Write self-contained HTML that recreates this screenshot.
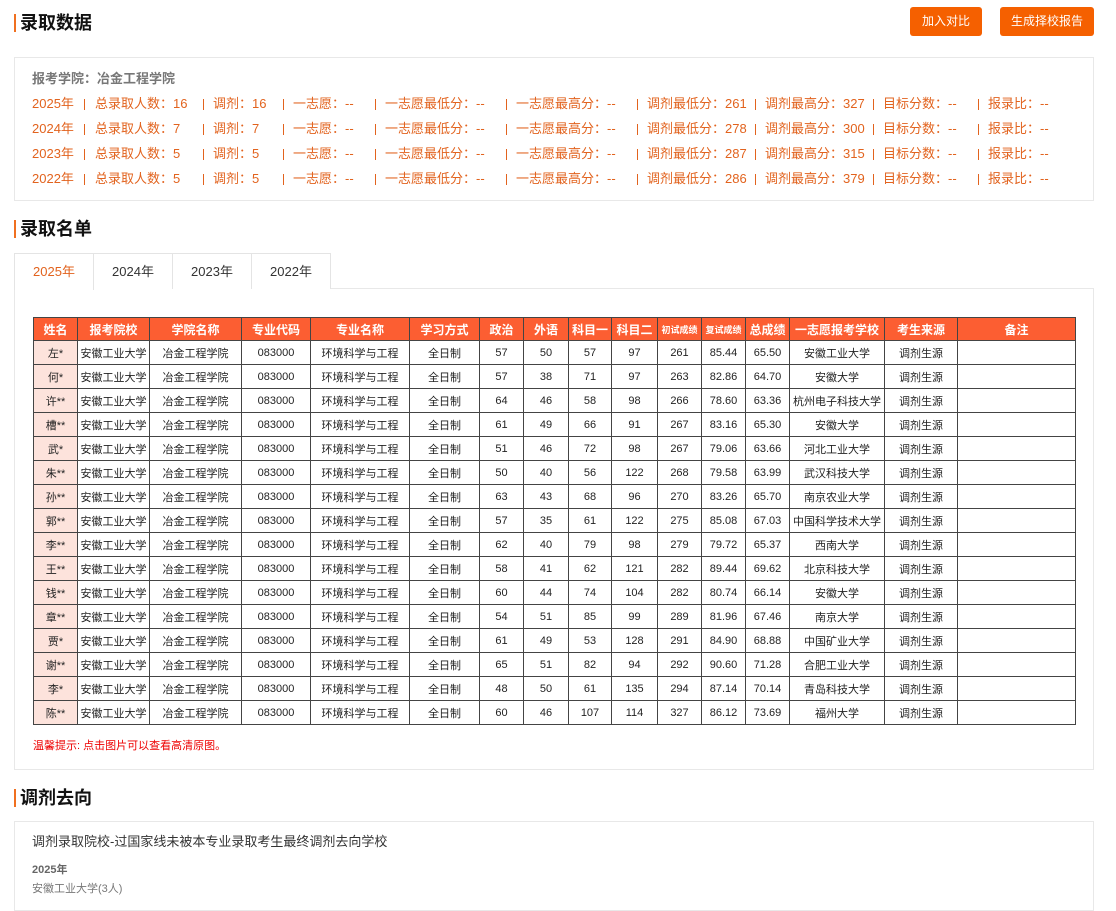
<!DOCTYPE html>
<html><head><meta charset="utf-8"><style>
*{margin:0;padding:0;box-sizing:border-box}
body{width:1116px;height:899px;overflow:hidden;background:#fff;font-family:"Liberation Sans","Noto Sans CJK SC",sans-serif;position:relative;color:#333}
.t{position:absolute;left:14px;font-size:18px;font-weight:bold;color:#111;border-left:2px solid #f07020;padding-left:4px;line-height:18px}
.btn{position:absolute;top:7px;height:29px;background:#f56000;color:#fff;font-size:12px;line-height:29px;text-align:center;border-radius:3px}
.box{position:absolute;left:14px;width:1080px;border:1px solid #e8e8e8}
.r{position:absolute;font-size:13px;line-height:16px;color:#e2631e;white-space:nowrap}
.sep{position:absolute;width:1px;height:11px;background:#e2631e}
.tab{position:absolute;top:253px;height:36px;width:80px;border:1px solid #e4e4e4;border-bottom:none;font-size:13px;line-height:36px;text-align:center;background:#fff;color:#333}
table{position:absolute;left:33px;top:317px;width:1042px;border-collapse:collapse;table-layout:fixed;font-size:11px}
td,th{border:1px solid #444;text-align:center;height:24px;white-space:nowrap;overflow:hidden;color:#222}
th{background:#fc5e32;color:#fff;font-size:12px;height:23px}
th.s{font-size:9px}
td:first-child{background:#fde3dc}
</style></head><body>
<div class="t" style="top:14px">录取数据</div>
<div class="btn" style="left:910px;width:72px">加入对比</div>
<div class="btn" style="left:1000px;width:94px">生成择校报告</div>
<div class="box" style="top:57px;height:144px"></div>
<div class="r" style="left:32px;top:71px;color:#777;font-weight:bold">报考学院：冶金工程学院</div>
<div id="rows"></div>
<div class="t" style="top:220px">录取名单</div>
<div class="box" style="top:288px;height:482px"></div>
<div class="tab" style="left:14px;color:#e2631e;height:37px">2025年</div>
<div class="tab" style="left:93px">2024年</div>
<div class="tab" style="left:172px">2023年</div>
<div class="tab" style="left:251px">2022年</div>
<table>
<colgroup><col style="width:44px"><col style="width:72px"><col style="width:92px"><col style="width:69px"><col style="width:99px"><col style="width:70px"><col style="width:44px"><col style="width:45px"><col style="width:43px"><col style="width:46px"><col style="width:44px"><col style="width:44px"><col style="width:44px"><col style="width:95px"><col style="width:73px"><col style="width:118px"></colgroup>
<tr><th>姓名</th><th>报考院校</th><th>学院名称</th><th>专业代码</th><th>专业名称</th><th>学习方式</th><th>政治</th><th>外语</th><th>科目一</th><th>科目二</th><th class="s">初试成绩</th><th class="s">复试成绩</th><th>总成绩</th><th>一志愿报考学校</th><th>考生来源</th><th>备注</th></tr>
<tbody id="tb"></tbody>
</table>
<div style="position:absolute;left:33px;top:737px;font-size:11px;color:#e00">温馨提示: 点击图片可以查看高清原图。</div>
<div class="t" style="top:789px">调剂去向</div>
<div class="box" style="top:821px;height:90px"></div>
<div style="position:absolute;left:32px;top:831px;font-size:13px;color:#333">调剂录取院校-过国家线未被本专业录取考生最终调剂去向学校</div>
<div style="position:absolute;left:32px;top:861px;font-size:11px;color:#666;font-weight:bold">2025年</div>
<div style="position:absolute;left:32px;top:880px;font-size:11px;color:#777">安徽工业大学(3人)</div>
<script>
var d=[["2025","16","16","261","327"],["2024","7","7","278","300"],["2023","5","5","287","315"],["2022","5","5","286","379"]];
var h="";
d.forEach(function(r,i){var y=104+i*25;
var it=[[32,r[0]+"年"],[95,"总录取人数："+r[1]],[213,"调剂："+r[2]],[293,"一志愿：--"],[385,"一志愿最低分：--"],[516,"一志愿最高分：--"],[647,"调剂最低分："+r[3]],[765,"调剂最高分："+r[4]],[883,"目标分数：--"],[988,"报录比：--"]];
it.forEach(function(a){h+='<div class="r" style="left:'+a[0]+'px;top:'+(y-8)+'px">'+a[1]+'</div>'});
[84,203,283,375,506,637,755,873,978].forEach(function(x){h+='<div class="sep" style="left:'+x+'px;top:'+(y-5)+'px"></div>'});
});
document.getElementById("rows").innerHTML=h;
var t=[["左*",57,50,57,97,261,"85.44","65.50","安徽工业大学"],["何*",57,38,71,97,263,"82.86","64.70","安徽大学"],["许**",64,46,58,98,266,"78.60","63.36","杭州电子科技大学"],["槽**",61,49,66,91,267,"83.16","65.30","安徽大学"],["武*",51,46,72,98,267,"79.06","63.66","河北工业大学"],["朱**",50,40,56,122,268,"79.58","63.99","武汉科技大学"],["孙**",63,43,68,96,270,"83.26","65.70","南京农业大学"],["郭**",57,35,61,122,275,"85.08","67.03","中国科学技术大学"],["李**",62,40,79,98,279,"79.72","65.37","西南大学"],["王**",58,41,62,121,282,"89.44","69.62","北京科技大学"],["钱**",60,44,74,104,282,"80.74","66.14","安徽大学"],["章**",54,51,85,99,289,"81.96","67.46","南京大学"],["贾*",61,49,53,128,291,"84.90","68.88","中国矿业大学"],["谢**",65,51,82,94,292,"90.60","71.28","合肥工业大学"],["李*",48,50,61,135,294,"87.14","70.14","青岛科技大学"],["陈**",60,46,107,114,327,"86.12","73.69","福州大学"]];
var b="";
t.forEach(function(r){b+="<tr><td>"+r[0]+"</td><td>安徽工业大学</td><td>冶金工程学院</td><td>083000</td><td>环境科学与工程</td><td>全日制</td>";
for(var i=1;i<9;i++)b+="<td>"+r[i]+"</td>";b+="<td>调剂生源</td><td></td></tr>"});
document.getElementById("tb").innerHTML=b;
</script>
</body></html>
